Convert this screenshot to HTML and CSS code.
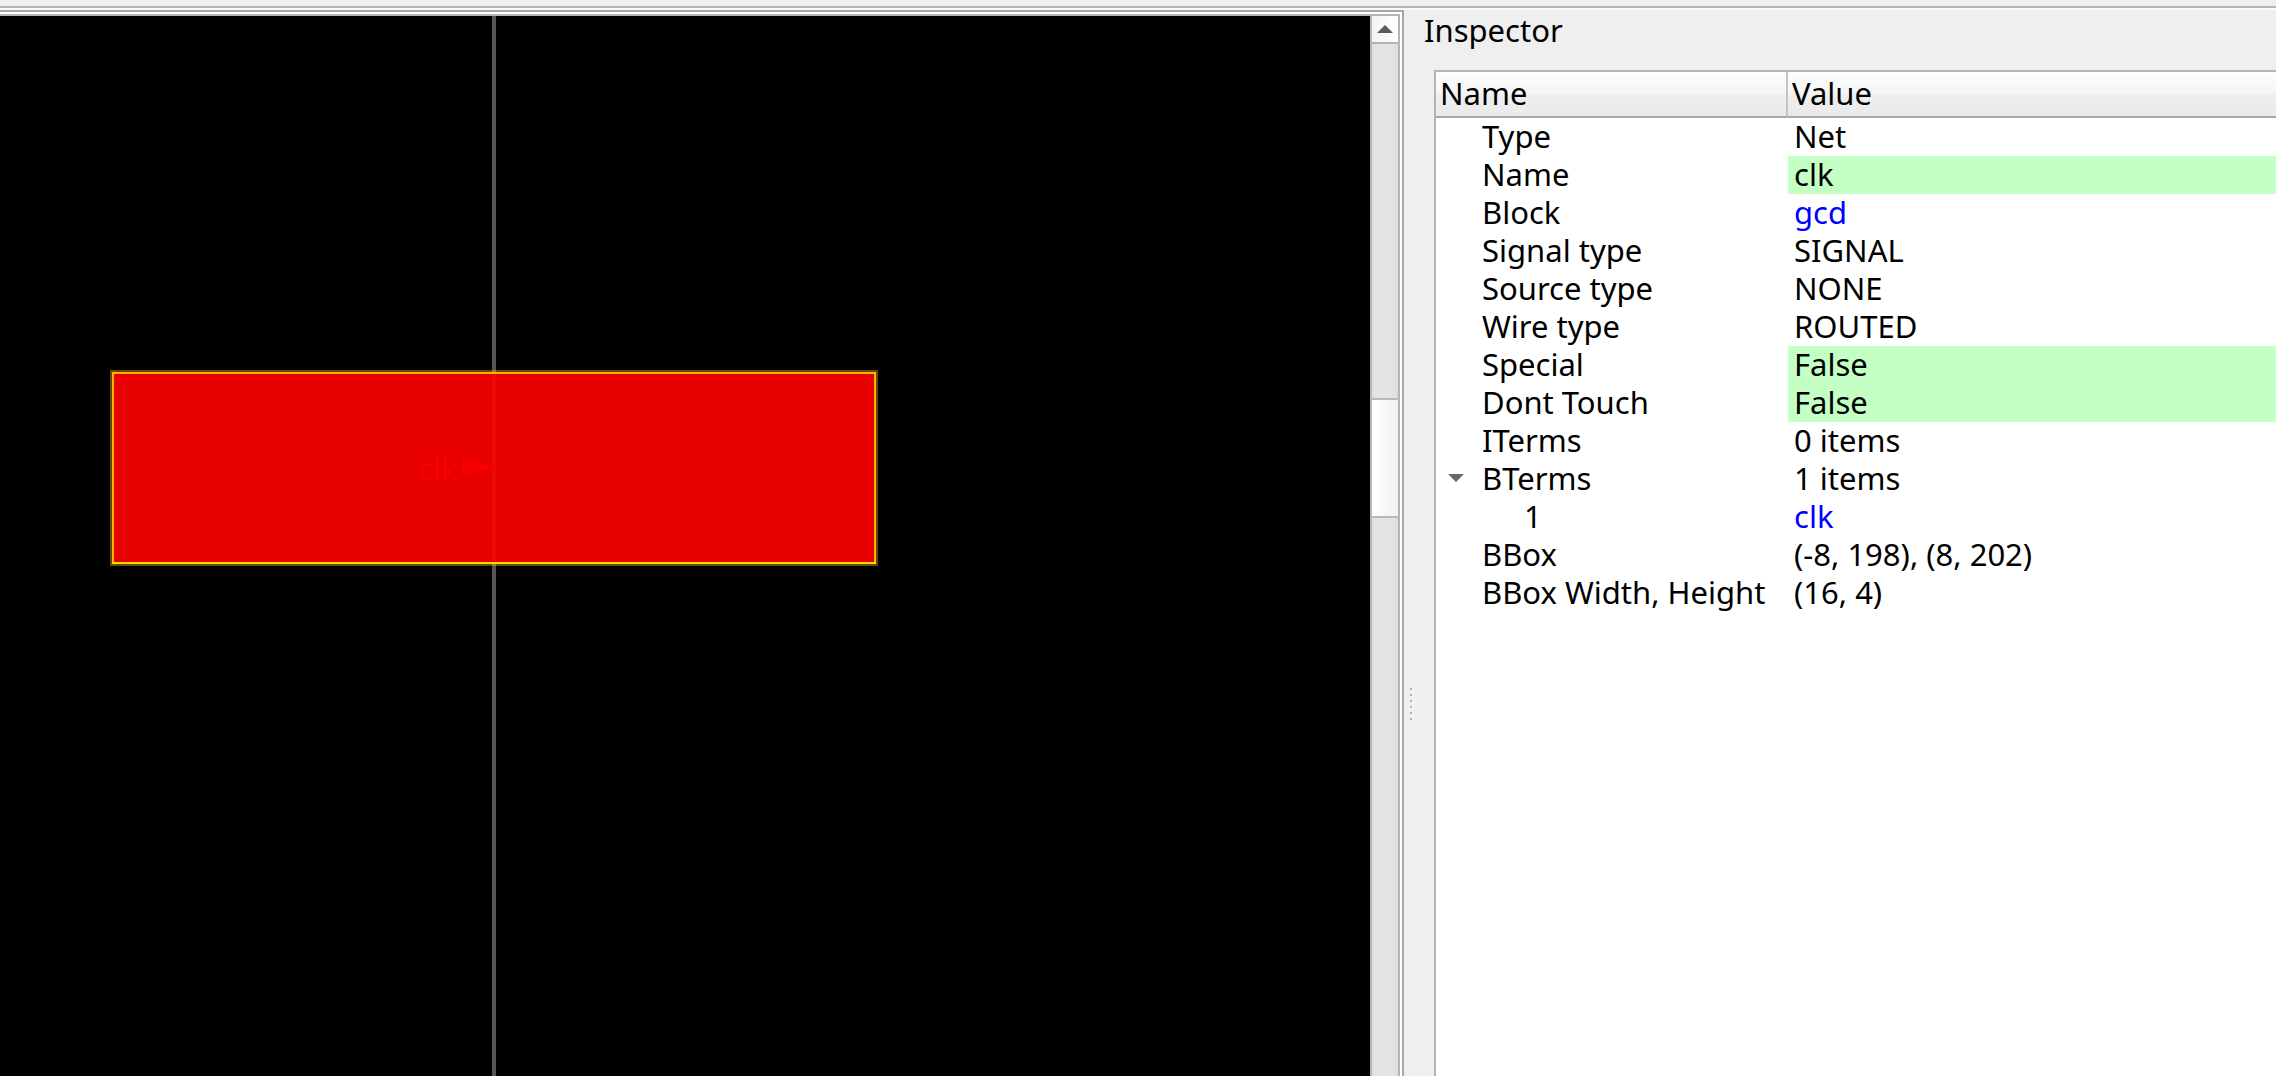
FILE: index.html
```html
<!DOCTYPE html>
<html lang="en">
<head>
<meta charset="utf-8">
<title>Inspector</title>
<link rel="stylesheet" href="styles.css">
</head>
<body>
<div class="toolbar-edge"></div>
<main class="workspace">
  <section class="viewer" aria-label="Layout">
    <div class="viewer-frame">
      <svg class="canvas" role="img" aria-label="Layout view">
        <rect x="492" y="0" width="4" height="100%" fill="#555"/>
        <rect x="110" y="354" width="768" height="196" fill="#ffb400" fill-opacity="0.4"/>
        <rect x="112" y="356" width="764" height="192" fill="#ffb400"/>
        <rect x="112" y="546" width="764" height="2" fill="#ffdc00"/>
        <rect x="114" y="358" width="760" height="188" fill="#e80000"/>
        <rect x="492" y="358" width="4" height="188" fill="#ee0808"/>
        <text class="pin-label" x="418" y="464">clk</text>
        <path d="M462 443 L494 450 V452 L462 460 Z" fill="#f80000"/>
      </svg>
      <div class="scrollbar">
        <button class="scroll-up" aria-label="Scroll up">
          <svg width="16" height="8" viewBox="0 0 16 8"><path d="M0 8 L8 0 L16 8 Z" fill="#5c5c5c"/></svg>
        </button>
        <div class="scroll-before"></div>
        <div class="scroll-thumb"></div>
        <div class="scroll-after"></div>
      </div>
    </div>
  </section>
  <aside class="dock">
    <div class="splitter">
      <i class="dot"></i><i class="dot"></i><i class="dot"></i><i class="dot"></i><i class="dot"></i><i class="dot"></i>
    </div>
    <div class="inspector">
      <h1 class="title">Inspector</h1>
      <div class="tree">
        <table class="properties">
          <colgroup><col class="name-column"><col></colgroup>
          <thead><tr><th>Name</th><th>Value</th></tr></thead>
          <tbody>
            <tr><td>Type</td><td>Net</td></tr>
            <tr><td>Name</td><td class="editable">clk</td></tr>
            <tr><td>Block</td><td><a href="#gcd">gcd</a></td></tr>
            <tr><td>Signal type</td><td>SIGNAL</td></tr>
            <tr><td>Source type</td><td>NONE</td></tr>
            <tr><td>Wire type</td><td>ROUTED</td></tr>
            <tr><td>Special</td><td class="editable">False</td></tr>
            <tr><td>Dont Touch</td><td class="editable">False</td></tr>
            <tr><td>ITerms</td><td>0 items</td></tr>
            <tr><td class="parent"><button class="expander" aria-label="Collapse BTerms" aria-expanded="true"><svg width="16" height="8" viewBox="0 0 16 8"><path d="M0 0 H16 L8 8 Z" fill="#686868"/></svg></button>BTerms</td><td>1 items</td></tr>
            <tr><td class="child">1</td><td><a href="#clk">clk</a></td></tr>
            <tr><td>BBox</td><td>(-8, 198), (8, 202)</td></tr>
            <tr><td>BBox Width, Height</td><td>(16, 4)</td></tr>
          </tbody>
        </table>
      </div>
    </div>
  </aside>
</main>
</body>
</html>
```

FILE: styles.css
```css
* {
  box-sizing: border-box;
}

body {
  margin: 0;
  height: 100vh;
  display: flex;
  flex-direction: column;
  overflow: hidden;
  background: #efefef;
  color: #000;
  font-family: "Noto Sans", sans-serif;
  font-size: 31px;
  line-height: 36px;
}

button {
  margin: 0;
  padding: 0;
  border: 0;
  background: none;
}

.toolbar-edge {
  flex: none;
  height: 10px;
  border-bottom: 2px solid #f8f8f8;
  background: linear-gradient(#efefef 6px, #b4b4b4 6px);
}

.workspace {
  flex: 1;
  min-height: 0;
  display: grid;
  grid-template-columns: minmax(0, 1404fr) minmax(0, 872fr);
}

.viewer {
  padding: 2px 2px 0 0;
  border: solid #a8a8a8;
  border-width: 2px 2px 0 0;
  background: #fff;
}

.viewer-frame {
  height: 100%;
  display: flex;
  border: solid #b4b4b4;
  border-width: 2px 2px 0 0;
}

.canvas {
  flex: 1;
  min-width: 0;
  height: 100%;
  background: #000;
}

.pin-label {
  font-size: 31px;
  fill: #f80000;
}

.scrollbar {
  flex: none;
  width: 28px;
  display: flex;
  flex-direction: column;
  border-left: 2px solid #b8b5b2;
  background: linear-gradient(90deg, #dedede, #e4e4e4 3px, #e4e4e4 20px, #dcdcdc);
}

.scroll-up {
  flex: none;
  height: 28px;
  display: flex;
  align-items: center;
  justify-content: center;
  border-bottom: 2px solid #b4b4b4;
  background: linear-gradient(90deg, #f3f3f3, #fff);
}

.scroll-before {
  flex: 354 1 0;
}

.scroll-thumb {
  flex: none;
  height: 120px;
  border: solid #b8b8b8;
  border-width: 2px 0;
  background: linear-gradient(90deg, #fff, #f1f1f1);
}

.scroll-after {
  flex: 558 1 0;
}

.dock {
  display: flex;
}

.splitter {
  flex: none;
  width: 20px;
  padding: 63vh 0 0 6px;
  display: flex;
  flex-direction: column;
  gap: 4px;
}

.dot {
  flex: none;
  width: 2px;
  height: 2px;
  background: #b4b4b4;
  box-shadow: 2px 2px #f8f8f8;
}

.inspector {
  flex: 1;
  min-width: 0;
  display: flex;
  flex-direction: column;
}

.title {
  margin: 0;
  padding: 2px 0 22px;
  font-size: 31px;
  font-weight: 400;
}

.tree {
  flex: 1;
  margin-left: 10px;
  border: solid #b4b4b4;
  border-width: 2px 0 0 2px;
  background: #fff;
}

.properties {
  width: 100%;
  table-layout: fixed;
  border-collapse: separate;
  border-spacing: 0;
}

.name-column {
  width: 352px;
}

.properties th {
  height: 46px;
  padding: 0 4px 2px;
  border-bottom: 2px solid #a8a8a8;
  background: linear-gradient(#fdfdfd, #f5f5f5 50%, #f0f0f0 50%, #e9e9e9);
  font-weight: 400;
  text-align: left;
}

.properties th:first-child {
  border-right: 2px solid #c4c4c4;
}

.properties td {
  height: 38px;
  padding: 0 6px 2px;
  white-space: nowrap;
}

.properties td:first-child {
  padding: 0 0 2px 46px;
}

.properties .child:first-child {
  padding-left: 88px;
}

.properties .parent:first-child {
  padding-left: 12px;
}

.expander {
  width: 34px;
  height: 36px;
  display: inline-flex;
  align-items: center;
  vertical-align: top;
}

.properties .editable {
  background: #c4ffc4;
}

a {
  color: #00f;
  text-decoration: none;
}
```
